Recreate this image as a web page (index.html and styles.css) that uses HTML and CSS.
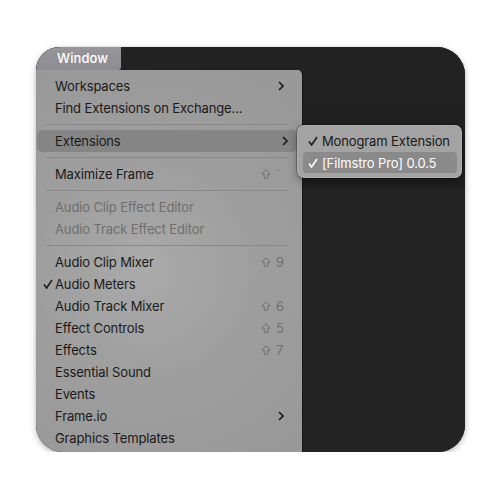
FILE: index.html
```html
<!DOCTYPE html>
<html>
<head>
<meta charset="utf-8">
<link rel="stylesheet" href="styles.css">
</head>
<body>
<div class="stage">
  <div class="card">
    <div class="topbar"><div class="tab">Window</div></div>
    <div class="main">
      <div class="menu">
        <div class="row"><span class="label">Workspaces</span><svg class="chev" viewBox="0 0 6 10"><polyline points="1,1 5,5 1,9"/></svg></div>
        <div class="row"><span class="label">Find Extensions on Exchange...</span></div>
        <div class="sep"></div>
        <div class="row hl"><span class="label">Extensions</span><svg class="chev" viewBox="0 0 6 10"><polyline points="1,1 5,5 1,9"/></svg></div>
        <div class="sep"></div>
        <div class="row"><span class="label">Maximize Frame</span><span class="sc"><svg class="shift" viewBox="0 0 10 10"><path d="M5 0.8 L9.2 5.2 H6.8 V9.2 H3.2 V5.2 H0.8 Z"/></svg><span class="key">`</span></span></div>
        <div class="sep"></div>
        <div class="row dis"><span class="label">Audio Clip Effect Editor</span></div>
        <div class="row dis"><span class="label">Audio Track Effect Editor</span></div>
        <div class="sep"></div>
        <div class="row"><span class="label">Audio Clip Mixer</span><span class="sc"><svg class="shift" viewBox="0 0 10 10"><path d="M5 0.8 L9.2 5.2 H6.8 V9.2 H3.2 V5.2 H0.8 Z"/></svg><span class="key">9</span></span></div>
        <div class="row"><svg class="check" viewBox="0 0 10 10"><polyline points="1,5.5 3.6,9 9,1"/></svg><span class="label">Audio Meters</span></div>
        <div class="row"><span class="label">Audio Track Mixer</span><span class="sc"><svg class="shift" viewBox="0 0 10 10"><path d="M5 0.8 L9.2 5.2 H6.8 V9.2 H3.2 V5.2 H0.8 Z"/></svg><span class="key">6</span></span></div>
        <div class="row"><span class="label">Effect Controls</span><span class="sc"><svg class="shift" viewBox="0 0 10 10"><path d="M5 0.8 L9.2 5.2 H6.8 V9.2 H3.2 V5.2 H0.8 Z"/></svg><span class="key">5</span></span></div>
        <div class="row"><span class="label">Effects</span><span class="sc"><svg class="shift" viewBox="0 0 10 10"><path d="M5 0.8 L9.2 5.2 H6.8 V9.2 H3.2 V5.2 H0.8 Z"/></svg><span class="key">7</span></span></div>
        <div class="row"><span class="label">Essential Sound</span></div>
        <div class="row"><span class="label">Events</span></div>
        <div class="row"><span class="label">Frame.io</span><svg class="chev" viewBox="0 0 6 10"><polyline points="1,1 5,5 1,9"/></svg></div>
        <div class="row"><span class="label">Graphics Templates</span></div>
      </div>
      <div class="dark"></div>
    </div>
    <div class="submenu">
      <div class="srow"><svg class="check" viewBox="0 0 10 10"><polyline points="1,5.5 3.6,9 9,1"/></svg><span>Monogram Extension</span></div>
      <div class="srow shl"><svg class="check" viewBox="0 0 10 10"><polyline points="1,5.5 3.6,9 9,1"/></svg><span>[Filmstro Pro] 0.0.5</span></div>
    </div>
  </div>
</div>
</body>
</html>
```
FILE: styles.css
```css
html, body {
  margin: 0;
  background: #ffffff;
}
body {
  font-family: "Inter", "Liberation Sans", sans-serif;
  font-size: 13px;
  letter-spacing: -0.13px;
}
.stage {
  padding: 47px 0 0 36px;
}
.card {
  position: relative;
  width: 429px;
  height: 405px;
  border-radius: 24px 28px 27px 27px;
  overflow: hidden;
  background: #222222;
  box-shadow: 0 2px 6px rgba(0, 0, 0, 0.28), 0 0 1px rgba(0, 0, 0, 0.3);
  display: flex;
  flex-direction: column;
}
.topbar {
  height: 23px;
  flex: none;
  background: #222222;
  display: flex;
}
.tab {
  width: 64px;
  padding-left: 21px;
  background: linear-gradient(#96969b, #8c8c91);
  color: #ffffff;
  font-weight: 500;
  line-height: 22px;
  border-bottom-right-radius: 3px;
  letter-spacing: 0.1px;
}
.main {
  flex: 1;
  display: flex;
  min-height: 0;
}
.menu {
  width: 266px;
  flex: none;
  padding-top: 5px;
  border-top-right-radius: 5px;
  border-right: 1px solid #151515;
  background: radial-gradient(circle at 110px 200px, #aaaaaa 0, #9e9e9e 110px, #999999 220px, #979797 320px);
  color: #1a1a1a;
}
.row {
  position: relative;
  height: 22px;
  display: flex;
  align-items: center;
  padding: 0 13px 0 19px;
  margin: 0 4px 0 0;
}
.row.hl {
  background: #858585;
  border-radius: 5px;
  margin: 0 5px 0 1px;
  padding: 0 8px 0 18px;
}
.row.dis {
  color: #6f6f6f;
}
.label {
  flex: 1;
  white-space: nowrap;
}
.chev {
  width: 6px;
  height: 10px;
  fill: none;
  stroke: #1c1c1c;
  stroke-width: 1.6;
  margin-right: 1px;
}
.sc {
  display: flex;
  align-items: center;
  gap: 5px;
  color: #707070;
  width: 24px;
}
.shift {
  width: 10px;
  height: 10px;
  fill: none;
  stroke: #707070;
  stroke-width: 1;
}
.key {
  width: 9px;
}
.check {
  position: absolute;
  left: 7px;
  top: 6px;
  width: 10px;
  height: 10px;
  fill: none;
  stroke: #1c1c1c;
  stroke-width: 1.6;
}
.sep {
  height: 1px;
  background: #888888;
  margin: 5px 14px 5px 10px;
}
.dark {
  flex: 1;
  background: linear-gradient(#212121 0, #1f1f1f 118px, #242424 119px, #242424 100%);
}
.submenu {
  position: absolute;
  left: 261px;
  top: 78px;
  width: 154px;
  padding: 5px 5px 5px 6px;
  border-radius: 7px;
  background: #a3a3a3;
  box-shadow: 0 0 0 1px rgba(0, 0, 0, 0.25), inset 0 0 0 1px rgba(255, 255, 255, 0.12), 0 3px 8px rgba(0, 0, 0, 0.35);
  color: #1a1a1a;
}
.srow {
  position: relative;
  height: 22px;
  display: flex;
  align-items: center;
  padding-left: 19px;
  white-space: nowrap;
}
.srow .check {
  left: 5px;
}
.srow.shl {
  height: 21px;
  background: #8a8a8a;
  border-radius: 4px;
  color: #ffffff;
}
.srow.shl .check {
  stroke: #ffffff;
}
```
